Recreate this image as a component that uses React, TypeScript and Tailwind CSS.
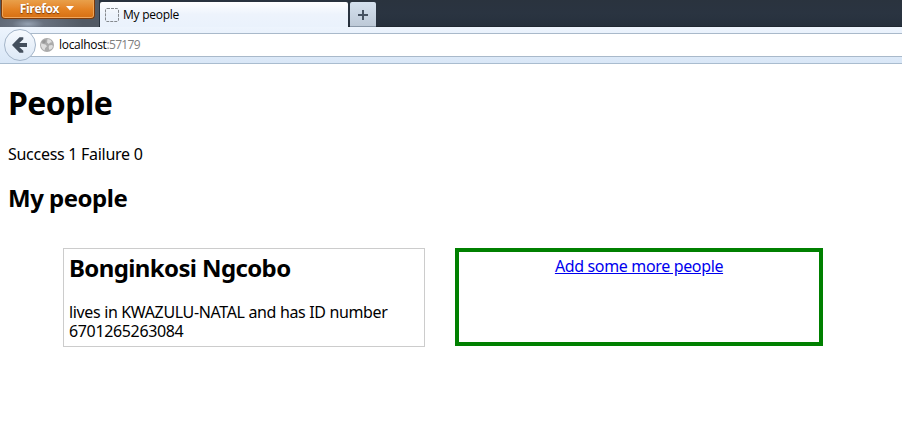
function FirefoxButton() {
  return (
    <button className="ml-px flex h-[19px] w-[94px] items-start justify-center gap-[7px] rounded-b-[4px] border border-t-0 border-[#7e3a08] bg-linear-to-b from-[#e9a04a] via-[#e48324] to-[#d66f12] pr-[2px] font-['Open_Sans',sans-serif] text-[12px] leading-[17px] font-bold text-white shadow-[inset_0_-1px_0_#f0a860,inset_1px_0_0_#eda65a,inset_-1px_0_0_#eda65a] [text-shadow:0_1px_1px_#7a3b08]">
      <span className="tracking-[-0.35px]">Firefox</span>
      <svg width="8" height="5" viewBox="0 0 8 5" className="mt-[6px]">
        <path d="M0 0h8L4 4.5z" fill="white" />
      </svg>
    </button>
  );
}

function TabStrip() {
  return (
    <div className="flex h-[27px] bg-linear-to-b from-[#2a333e] via-[#2a3441] to-[#26303c] shadow-[inset_0_-1px_0_#202831]">
      <div className="h-[27px] w-[99px] bg-[radial-gradient(ellipse_at_28px_24px,#95a1b1_0,#68717f_16px,#525a65_55px)]">
        <FirefoxButton />
      </div>
      <div className="mt-[2px] ml-px flex h-[25px] w-[248px] items-center rounded-t-[2px] bg-linear-to-b from-white via-[#edf3fc] to-[#eaf2fc] pl-[5px]">
        <svg width="14" height="14" viewBox="0 0 14 14">
          <rect x="0.5" y="0.5" width="13" height="13" rx="1.5" fill="none" stroke="#85898e" strokeDasharray="3 1" />
        </svg>
        <span className="ml-[4px] font-['Open_Sans',sans-serif] text-[12px] leading-4 tracking-[-0.25px] text-black">
          My people
        </span>
      </div>
      <div className="mt-[2px] ml-[2px] flex h-[25px] w-[26px] items-center justify-center rounded-t-[2px] border-b border-[#8997a7] bg-linear-to-b from-[#d5e1ee] to-[#bdc9d7]">
        <svg width="10" height="10" viewBox="0 0 10 10" className="mt-px">
          <path d="M4 0h2v4h4v2H6v4H4V6H0V4h4z" fill="#465261" />
        </svg>
      </div>
    </div>
  );
}

function AddressBar() {
  return (
    <div className="relative h-[37px] border-b border-[#a9bccf] bg-linear-to-b from-[#edf4fd] to-[#d9e7f7] pt-[6px]">
      <div className="ml-[20px] flex h-[24px] items-center border-y border-[#a9b9ca] bg-white pl-[20px]">
        <svg width="14" height="14" viewBox="0 0 14 14">
          <circle cx="7" cy="7" r="7" fill="#ababab" />
          <path d="M7.5 1l3 .8 1.5 2.4-1.7.2-1.5 1.6L7 4.5zM1.2 5.2 3 6l2.5.5L7 8.2 5.2 10l-.7 2.5-2-1.5L1 8zM9 7.5l2.5-.6 1.6.9-1 2.8L9.5 12l-.8-2z" fill="#dedede" />
          <path d="M2 3.5 4 2l2 .6L5.2 5 3 5.2z" fill="#979797" />
        </svg>
        <span className="ml-[5px] font-['Open_Sans',sans-serif] text-[12px] leading-4 tracking-[-0.3px] text-black">
          localhost<span className="tracking-[-0.7px] text-[#808080]">:57179</span>
        </span>
      </div>
      <svg width="34" height="34" viewBox="0 0 34 34" className="absolute top-[1px] left-[3px]">
        <defs>
          <linearGradient id="back-fill" x1="0" y1="0" x2="0" y2="1">
            <stop offset="0" stopColor="#f7fafe" />
            <stop offset="1" stopColor="#dce8f6" />
          </linearGradient>
        </defs>
        <circle cx="17" cy="17" r="15.5" fill="url(#back-fill)" stroke="#a4b5c9" />
        <path d="M9 17 16.5 9.2h3.8v2L16.3 15H24v4h-7.7l4 3.8v2h-3.8z" fill="#444f5d" />
      </svg>
    </div>
  );
}

export default function App() {
  return (
    <div className="h-[445px] w-[902px] overflow-hidden bg-white text-black">
      <TabStrip />
      <AddressBar />
      <main className="px-2 font-['Noto_Sans','Open_Sans',sans-serif] text-[16px] leading-[19px] tracking-[-0.35px]">
        <h1 className="pt-[20px] text-[32px] leading-[38px] font-bold tracking-[-0.6px]">People</h1>
        <p className="mt-[23px] tracking-[-0.28px]">Success 1 Failure 0</p>
        <h2 className="mt-[19px] text-[24px] leading-[29px] font-bold tracking-[-0.5px]">My people</h2>
        <div className="mt-[36px] ml-[55px] flex items-start gap-[30px]">
          <section className="h-[99px] w-[362px] border border-[#cccccc] px-[5px] pt-[4px]">
            <h2 className="text-[24px] leading-[29px] font-bold tracking-[-0.62px]">Bonginkosi Ngcobo</h2>
            <p className="mt-[21px]">lives in KWAZULU-NATAL and has ID number 6701265263084</p>
          </section>
          <section className="h-[98px] w-[368px] border-4 border-[#008000] pt-[5px] text-center">
            <a href="#" className="text-[#0000ee] underline">
              Add some more people
            </a>
          </section>
        </div>
      </main>
    </div>
  );
}
